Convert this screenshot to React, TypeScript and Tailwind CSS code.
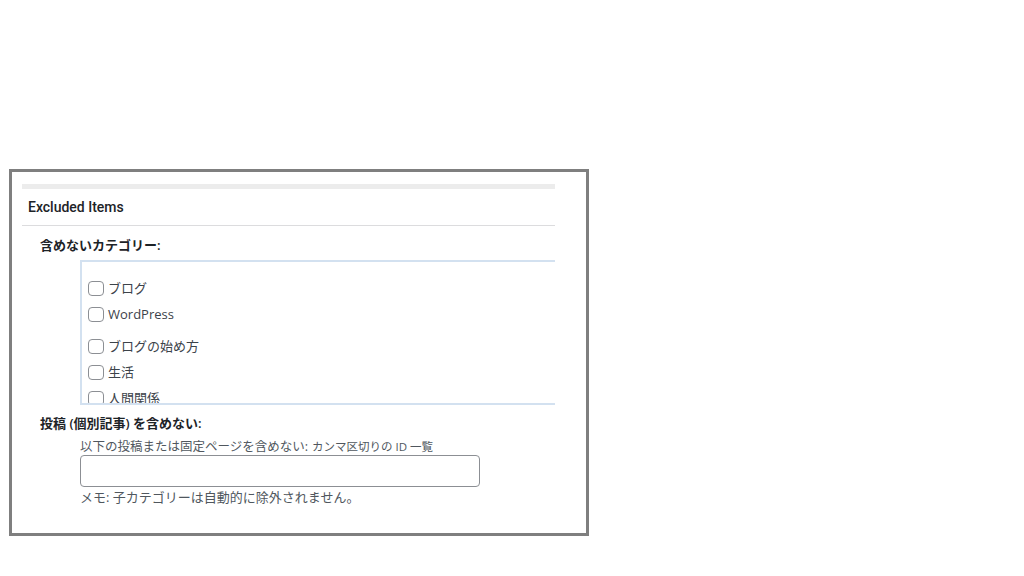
import React from "react";

const font = { fontFamily: '"Open Sans", "Noto Sans CJK JP", sans-serif' };

function Item({ label, extra }: { label: string; extra?: boolean }) {
  return (
    <div className={`flex h-[26px] items-center gap-[4px] ${extra ? "mb-[6px]" : ""}`}>
      <span className="box-border h-[15px] w-[16px] shrink-0 rounded-[4px] border border-[#8c8f94] bg-white" />
      <span className="text-[13px] leading-[16px] text-[#3c434a]">{label}</span>
    </div>
  );
}

export default function App() {
  return (
    <div className="min-h-[576px] w-[1024px] bg-white pl-[9px] pt-[169px]" style={font}>
      <div className="box-border h-[367px] w-[580px] border-[3px] border-[#7f7f7f] bg-white pl-[10px] pt-[12px]">
        <div className="w-[533px] overflow-hidden">
          <div className="h-[5px] bg-[#ececec]" />
          <div
            className="flex h-[37px] items-center border-b border-[#dcdcde] pl-[6px] text-[14px] leading-[18px] font-medium text-[#1d2327]"
            style={{ fontFamily: 'Roboto, "Noto Sans CJK JP", sans-serif' }}
          >
            Excluded Items
          </div>
          <div className="flex h-[34px] items-center pl-[18px] pt-[4px] text-[13px] leading-[16px] font-semibold text-[#1d2327]">
            含めないカテゴリー:
          </div>
          <div className="ml-[58px] box-border h-[145px] w-[520px] overflow-hidden border-2 border-[#d3e1f0] pl-[6px] pt-[13px]">
            <Item label="ブログ" />
            <Item label="WordPress" extra />
            <Item label="ブログの始め方" />
            <Item label="生活" />
            <Item label="人間関係" />
          </div>
          <div className="flex h-[33px] items-center pl-[18px] pt-[2px] text-[13px] leading-[16px] font-semibold text-[#1d2327]">
            投稿 (個別記事) を含めない:
          </div>
          <div className="pl-[58px]">
            <div className="flex h-[17px] items-center text-[12.5px] leading-[15px] text-[#50575e]">
              以下の投稿または固定ページを含めない:
              <span className="ml-[4px] text-[11.5px]">カンマ区切りの ID 一覧</span>
            </div>
            <div className="box-border h-[32px] w-[400px] rounded-[4px] border border-[#8c8f94] bg-white" />
            <div className="flex h-[20px] items-center text-[13px] leading-[16px] text-[#50575e]">
              メモ: 子カテゴリーは自動的に除外されません。
            </div>
          </div>
        </div>
      </div>
    </div>
  );
}
